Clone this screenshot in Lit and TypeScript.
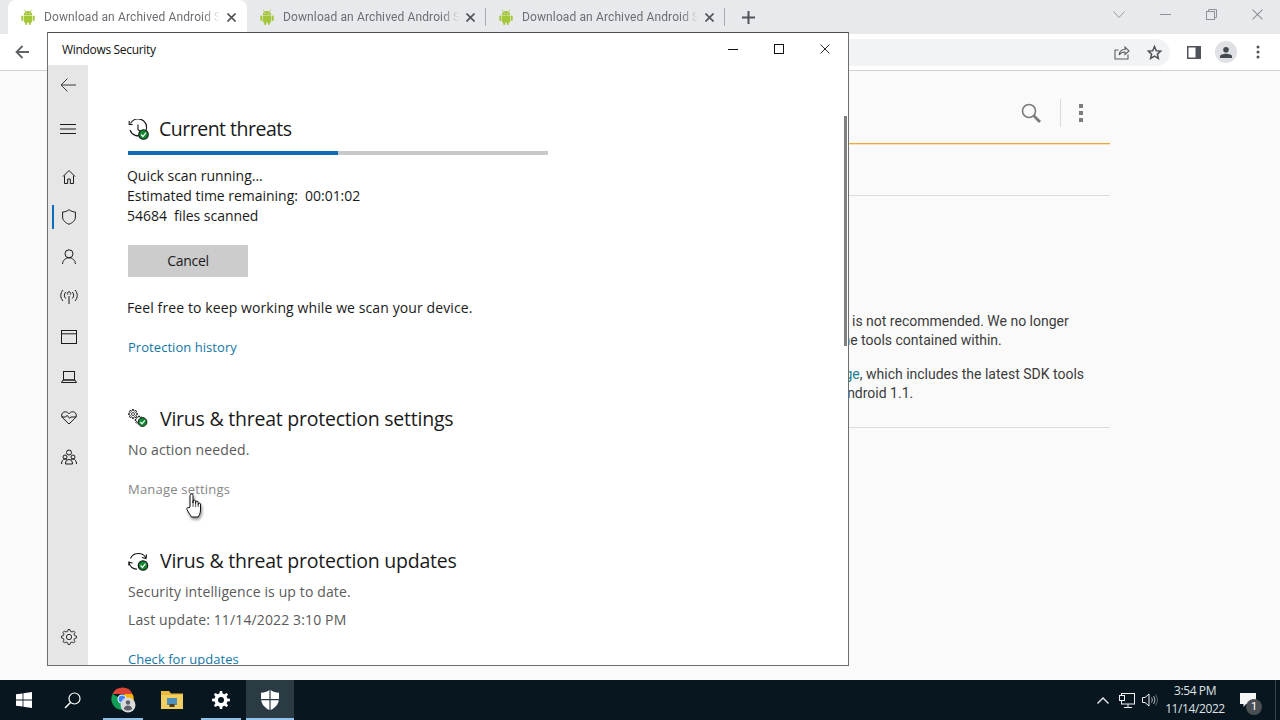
import { LitElement, html, css, svg } from "lit";
import { customElement } from "lit/decorators.js";

const gearPath = (cx: number, cy: number, ro: number, ri: number, teeth: number) => {
  const pts: string[] = [];
  const step = (Math.PI * 2) / teeth;
  for (let i = 0; i < teeth; i++) {
    const a = i * step;
    const w = step * 0.2;
    for (const [r, o] of [[ri, -w * 1.5], [ro, -w * 0.8], [ro, w * 0.8], [ri, w * 1.5]] as [number, number][]) {
      pts.push(`${(cx + r * Math.cos(a + o)).toFixed(2)},${(cy + r * Math.sin(a + o)).toFixed(2)}`);
    }
  }
  return pts.join(" ");
};

const android = html`<svg class="android" width="16" height="16" viewBox="0 0 16 16" fill="#a4c639">
  <path d="M3.9 6a4.1 4.1 0 0 1 8.2 0z"/><path d="M5.3 2.6 4.3.6M10.7 2.6l1-2" stroke="#a4c639" stroke-width=".7"/>
  <circle cx="6.2" cy="4.2" r=".5" fill="#fff"/><circle cx="9.8" cy="4.2" r=".5" fill="#fff"/>
  <path d="M3.9 6.6h8.2v6a1 1 0 0 1-1 1H4.900a1 1 0 0 1-1-1z"/>
  <rect x="1.300" y="6.500" width="2" height="5.500" rx="1"/><rect x="12.700" y="6.500" width="2" height="5.500" rx="1"/>
  <rect x="5.200" y="12" width="2" height="4" rx="1"/><rect x="8.800" y="12" width="2" height="4" rx="1"/>
</svg>`;

const xIcon = (size: number, color: string, w: number) =>
  html`<svg width=${size} height=${size} viewBox="0 0 10 10" fill="none" stroke=${color} stroke-width=${w}><path d="M.5.5l9 9M9.500.5l-9 9"/></svg>`;

const badge = (cx: number, cy: number, r: number) => svg`<circle cx=${cx} cy=${cy} r=${r} fill="#0f8a2e"/>
  <path d="M${cx - r * 0.5} ${cy}l${r * 0.38} ${r * 0.42} ${r * 0.65} -${r * 0.8}" fill="none" stroke="#fff" stroke-width="1.200"/>`;

const nav = [
  svg`<path d="M4 9.500 10 3.500l6 6M5.500 8.500V16.500h3.200v-4.500h2.600v4.500h3.200V8.500" />`,
  svg`<path d="M10 2.700c2 1.500 4 2.200 6.400 2.300v5c0 3.400-2.600 5.600-6.400 7.300C6.200 15.600 3.600 13.400 3.600 10V5C6 4.900 8 4.200 10 2.700z"/>`,
  svg`<circle cx="10" cy="6.800" r="4"/><path d="M3.500 17c.4-3.800 3-6.200 6.500-6.200s6.100 2.400 6.500 6.200"/>`,
  svg`<path d="M10 9v8M8.700 7.600a1.700 1.700 0 1 1 2.600 0"/><path d="M6.700 5.500c-1.800 2-1.800 4.500 0 6.500M13.300 5.500c1.800 2 1.800 4.500 0 6.500M4 3.500c-3 3.500-3 7.500 0 11M16 3.500c3 3.500 3 7.500 0 11" transform="translate(0 -.5)"/>`,
  svg`<rect x="2.500" y="3.500" width="15" height="13"/><path d="M2.500 6.800h15"/>`,
  svg`<rect x="4.500" y="4.500" width="11" height="8.500"/><path d="M2.500 15.500h15l-1.500-2.500H4z"/>`,
  svg`<path d="M10 17 3.800 11C1.500 8.600 3 4.800 6.300 4.800c1.600 0 2.800.8 3.700 2 .9-1.200 2.100-2 3.700-2 3.300 0 4.800 3.800 2.500 6.200z"/><path d="M2.600 10h4l1.500-1.700 2.500 3 1.300-1.300h5.500"/>`,
  svg`<circle cx="10" cy="5.500" r="2.500"/><circle cx="6" cy="10" r="2"/><circle cx="14" cy="10" r="2"/><path d="M2.500 17c0-3 1.500-5 3.500-5 1 0 1.800.4 2.400 1.200M17.500 17c0-3-1.500-5-3.500-5-1 0-1.800.4-2.400 1.200M6.500 17c0-3 1.500-4.500 3.500-4.500s3.500 1.500 3.500 4.500z"/>`,
];

@customElement("app-root")
export class AppRoot extends LitElement {
  static styles = css`
    :host { display: block; width: 1280px; height: 720px; position: relative; overflow: hidden; font-family: Roboto, sans-serif; background: #fafafa; }
    svg { display: block; flex: none; }
    .screen { display: flex; flex-direction: column; height: 720px; }
    .browser { flex: 1; display: flex; flex-direction: column; min-height: 0; }
    .strip { height: 34px; background: #e7e9ec; display: flex; padding-left: 8px; flex: none; }
    .tab { width: 239px; height: 34px; display: flex; align-items: center; padding-left: 12px; box-sizing: border-box; position: relative; font-size: 12px; color: #6a6e72; letter-spacing: 0.01em; }
    .tab.active { background: #fff; border-radius: 8px 8px 0 0; }
    .tab.sep { border-right: 1px solid #a8abaf; }
    .tab:not(.active) { height: 18px; margin-top: 8px; }
    .tab-label { width: 183px; margin-left: 8px; white-space: nowrap; -webkit-mask-image: linear-gradient(90deg, #000 160px, transparent 176px); mask-image: linear-gradient(90deg, #000 160px, transparent 176px); }
    .tab-x { width: 10px; display: flex; }
    .plus { width: 46px; display: flex; align-items: center; justify-content: center; }
    .winbtns { margin-left: auto; display: flex; }
    .winbtn { width: 46px; height: 28px; display: flex; align-items: center; justify-content: center; }
    .toolbar { height: 36px; background: #fff; border-bottom: 1px solid #d0d1d3; display: flex; align-items: center; padding-right: 6px; flex: none; }
    .tb-back { width: 44px; display: flex; justify-content: center; }
    .omni { margin-left: 36px; flex: 1; height: 27px; background: #f1f3f4; border-radius: 0 14px 14px 0; display: flex; justify-content: flex-end; align-items: center; margin-right: 8px; }
    .tbtn { width: 32px; display: flex; justify-content: center; align-items: center; }
    .avatar { width: 22px; height: 22px; border-radius: 50%; background: #dfe1e5; display: flex; align-items: center; justify-content: center; }
    .page { flex: 1; background: #fafafa; min-height: 0; }
    .doc { margin-left: 160px; width: 950px; }
    .doc-head { height: 72px; box-sizing: border-box; padding-top: 12px; padding-right: 27px; display: flex; justify-content: flex-end; align-items: center; }
    .doc-div { width: 1px; height: 28px; background: #d9d9d9; margin: 0 18px 0 19px; }
    .squares { display: flex; flex-direction: column; gap: 2.500px; }
    .squares i { width: 4px; height: 4.500px; background: #7d7d7d; display: block; }
    .doc-rule { height: 1px; background: #e9a93c; border-bottom: 1px solid #f7e2b8; }
    .doc-sub { height: 50px; border-bottom: 1px solid #dcdcdc; }
    .doc-text { padding: 116px 0 24px; border-bottom: 1px solid #dcdcdc; font-size: 14px; line-height: 19px; color: #3c3c3c; white-space: nowrap; }
    .doc-text .ln1 { margin-left: 692px; }
    .doc-text .ln2 { margin-left: 652px; }
    .doc-text .ln3 { margin-left: 669px; margin-top: 15px; }
    .doc-text .ln4 { margin-left: 678px; }
    .doc-link { color: #1a7f8f; }
    .taskbar { height: 40px; background: #08161f; display: flex; flex: none; color: #e6e9ea; }
    .tk { width: 48px; height: 40px; display: flex; align-items: center; justify-content: center; position: relative; }
    .tk.chrome { margin-left: 3px; }
    .tk.gap { margin-left: 1px; }
    .tk.on { background: #2b3b44; }
    .tk.run::after { content: ""; position: absolute; bottom: 0; left: 4px; right: 4px; height: 2px; background: #8fc0e6; }
    .tk.on::after { left: 0; right: 0; background: #8fc5ee; }
    .tray { margin-left: auto; display: flex; align-items: center; height: 40px; }
    .tr { display: flex; justify-content: center; align-items: center; height: 40px; }
    .tr.w24 { width: 24px; }
    .tr.w22 { width: 22px; }
    .clock { width: 68px; font-family: "Open Sans", sans-serif; font-size: 12px; line-height: 18px; text-align: center; letter-spacing: -0.4px; color: #dfe3e5; }
    .notif { width: 38px; position: relative; }
    .notif-n { position: absolute; left: 17px; top: 19px; width: 16px; height: 16px; border-radius: 50%; background: #4a4f53; color: #fff; font-size: 11px; line-height: 16px; text-align: center; }
    .tray-end { width: 1px; height: 40px; background: #38454c; margin: 0 4px 0 8px; }

    .win { position: absolute; left: 47px; top: 32px; width: 802px; height: 634px; box-sizing: border-box; background: #fff; border: 1px solid #6e6e6e; border-top-color: #4c4c4c; display: flex; flex-direction: column; font-family: "Open Sans", sans-serif; overflow: hidden; }
    .titlebar { height: 32px; flex: none; display: flex; align-items: center; padding-left: 14px; font-size: 12px; color: #111; letter-spacing: -0.32px; }
    .ctrls { margin-left: auto; display: flex; }
    .ctrl { width: 46px; height: 32px; display: flex; align-items: center; justify-content: center; }
    .body { flex: 1; display: flex; min-height: 0; }
    .side { width: 40px; background: #e6e6e6; display: flex; flex-direction: column; padding-bottom: 8px; box-sizing: border-box; flex: none; position: relative; }
    .sbtn { height: 40px; display: flex; align-items: center; justify-content: center; flex: none; padding-left: 2px; box-sizing: border-box; position: relative; }
    .sbtn.top { padding-left: 0; }
    .sbtn.burger { margin-top: 4px; margin-bottom: 8px; }
    .sbtn.active::before { content: ""; position: absolute; left: 4px; top: 8px; width: 2px; height: 24px; background: #0f6cbd; }
    .sbtn.settings { margin-top: auto; }
    .sbtn svg { fill: none; stroke: #1b1b1b; stroke-width: 1; }
    .sbtn svg.back { stroke: #3a3a3a; }
    .main { flex: 1; padding: 50px 0 0 40px; overflow: hidden; min-width: 0; color: #1a1a1a; font-size: 14px; line-height: 20px; white-space: nowrap; }
    .h { height: 28px; display: flex; align-items: center; font-size: 19.500px; line-height: 28px; letter-spacing: -0.23px; color: #1a1a1a; }
    .h .ico { width: 32px; display: flex; }
    .h.first { letter-spacing: -0.5px; }
    .h.first .ico { width: 31px; }
    .h.s { margin-top: 48px; }
    .bar { width: 420px; height: 4px; background: #c9c9c9; margin-top: 8px; }
    .bar i { display: block; height: 4px; background: #0f6cb4; }
    .status { margin: 11px 0 0 -1px; letter-spacing: -0.03px; }
    .cancel { width: 120px; height: 32px; background: #cccccc; margin-top: 19px; display: flex; align-items: center; justify-content: center; letter-spacing: -0.3px; }
    .p { margin-top: 20px; }
    .p.flush { margin: 21px 0 0 -1px; letter-spacing: 0.1px; }
    .p.tight { margin-top: 19px; }
    .link { color: #1377a6; font-size: 13px; letter-spacing: 0.05px; }
    .muted { color: #5a5a5a; letter-spacing: 0.13px; }
    .mt7 { margin-top: 7px; } .mt8 { margin-top: 8px; }
    .dim { color: #868686; font-size: 13px; letter-spacing: 0.2px; }
    .scroll { position: absolute; right: 1px; top: 83px; width: 3px; height: 230px; background: #808080; }
    .hand { position: absolute; left: 186px; top: 493px; filter: drop-shadow(1px 2px 1.500px rgba(0,0,0,.45)); }
  `;

  private tab(active: boolean, sep: boolean) {
    return html`<div class="tab ${active ? "active" : ""} ${sep ? "sep" : ""}">
      ${android}
      <span class="tab-label">Download an Archived Android S</span>
      <span class="tab-x">${xIcon(9, "#50545a", 1.800)}</span>
    </div>`;
  }

  render() {
    return html`
      <div class="screen">
        <div class="browser">
          <div class="strip">
            ${this.tab(true, false)}${this.tab(false, true)}${this.tab(false, true)}
            <div class="plus"><svg width="13" height="13" viewBox="0 0 13 13" stroke="#50545a" stroke-width="2"><path d="M6.500 0v13M0 6.500h13"/></svg></div>
            <div class="winbtns">
              <div class="winbtn"><svg width="12" height="7" viewBox="0 0 12 7" fill="none" stroke="#9a9da1"><path d="M.5.500 6 6.500 11.500.500"/></svg></div>
              <div class="winbtn"><svg width="11" height="1" viewBox="0 0 11 1" stroke="#8e9195"><path d="M0 .5h11"/></svg></div>
              <div class="winbtn"><svg width="11" height="11" viewBox="0 0 11 11" fill="none" stroke="#8e9195"><rect x=".5" y="2.500" width="8" height="8"/><path d="M2.500 2.500V.5h8v8h-2"/></svg></div>
              <div class="winbtn">${xIcon(11, "#8e9195", 1)}</div>
            </div>
          </div>
          <div class="toolbar">
            <div class="tb-back"><svg width="14" height="14" viewBox="0 0 14 14" fill="none" stroke="#5f6368" stroke-width="1.800"><path d="M14 7H1.500M7.500 1 1.500 7l6 6"/></svg></div>
            <div class="omni">
              <div class="tbtn"><svg width="16" height="15" viewBox="0 0 16 15" fill="none" stroke="#5a5e63" stroke-width="1.100"><path d="M14 9.500V14H1V5h3.500"/><path d="M5 10c.5-3.500 3-5.500 6-5.500V2l4 4-4 3.500V7C8.500 7 6.500 8 5 10z"/></svg></div>
              <div class="tbtn"><svg width="15" height="15" viewBox="0 0 15 15" fill="none" stroke="#50545a" stroke-width="1.500"><path d="M7.500 1.500 9.300 5.700l4.500.4-3.400 3 1 4.400-3.900-2.300-3.900 2.300 1-4.400-3.400-3 4.500-.4z"/></svg></div>
            </div>
            <div class="tbtn"><svg width="14" height="13" viewBox="0 0 14 13"><rect width="14" height="13" fill="#50545a"/><rect x="1.500" y="1.500" width="7" height="10" fill="#fff"/></svg></div>
            <div class="tbtn"><div class="avatar"><svg width="12" height="11" viewBox="0 0 12 11" fill="#454a50"><circle cx="6" cy="2.800" r="2.800"/><path d="M0 11V9.500c0-1.800 3-2.700 6-2.700s6 .9 6 2.700V11z"/></svg></div></div>
            <div class="tbtn"><svg width="4" height="14" viewBox="0 0 4 14" fill="#50545a"><circle cx="2" cy="2" r="1.500"/><circle cx="2" cy="7" r="1.500"/><circle cx="2" cy="12" r="1.500"/></svg></div>
          </div>
          <div class="page">
            <div class="doc">
              <div class="doc-head">
                <svg width="20" height="20" viewBox="0 0 20 20" fill="none" stroke="#7b7b7b"><circle cx="8" cy="8" r="6.500" stroke-width="1.600"/><path d="M12.800 12.800 19 19" stroke-width="2.800"/></svg>
                <div class="doc-div"></div>
                <div class="squares"><i></i><i></i><i></i></div>
              </div>
              <div class="doc-rule"></div>
              <div class="doc-sub"></div>
              <div class="doc-text">
                <div class="ln1">is not recommended. We no longer</div>
                <div class="ln2">use the tools contained within.</div>
                <div class="ln3"><span class="doc-link">page</span>, which includes the latest SDK tools</div>
                <div class="ln4">Android 1.1.</div>
              </div>
            </div>
          </div>
        </div>
        <div class="taskbar">
          <div class="tk"><svg width="16" height="16" viewBox="0 0 16 16" fill="#fff"><path d="M0 2.300 6.600 1.400V7.600H0zM7.400 1.300 16 0V7.600H7.400zM0 8.400H6.600V14.600L0 13.700zM7.400 8.400H16V16L7.400 14.700z"/></svg></div>
          <div class="tk"><svg width="17" height="17" viewBox="0 0 17 17" fill="none" stroke="#fff" stroke-width="1.200"><circle cx="10.500" cy="6.500" r="5.500"/><path d="M6.500 10.500 1 16" stroke-width="1.500"/></svg></div>
          <div class="tk chrome run"><svg width="26" height="26" viewBox="0 0 26 26">
            <path d="M2.500 7A11 11 0 0 1 22.500 7H12z" fill="#db4437"/>
            <path d="M2.500 7A11 11 0 0 0 12 23l5-8z" fill="#0f9d58"/>
            <path d="M22.500 7A11 11 0 0 1 12 23l5-8-3-8z" fill="#f4b400"/>
            <circle cx="12" cy="12" r="4.500" fill="#fff"/><circle cx="12" cy="12" r="3.500" fill="#4285f4"/>
            <circle cx="18" cy="18" r="7.500" fill="#d9dadb"/><circle cx="18" cy="15.500" r="2.200" fill="#5c6066"/><path d="M13.800 22c.4-2.400 2.200-3.500 4.200-3.500s3.800 1.100 4.200 3.500a7 7 0 0 1-8.400 0z" fill="#5c6066"/>
          </svg></div>
          <div class="tk gap"><svg width="22" height="18" viewBox="0 0 22 18"><path d="M0 0H8L10 2.500H22V18H0z" fill="#e8b93c"/><rect y="4" width="22" height="14" fill="#f3cf62"/><rect x="6" y="7" width="10" height="7" fill="#4f8fbd"/><rect x="8.500" y="13" width="5" height="3" fill="#55391b"/></svg></div>
          <div class="tk gap run"><svg width="18" height="18" viewBox="0 0 18 18"><polygon fill="#fff" points=${gearPath(9, 9, 9, 6.600, 8)}/><circle cx="9" cy="9" r="3" fill="#08161f"/></svg></div>
          <div class="tk gap on run"><svg width="18" height="20" viewBox="0 0 18 20" fill="#fff"><path d="M8.400 0C6 1.800 3 2.600 0 2.800V9H8.400zM9.600 0V9H18V2.800C15 2.600 12 1.800 9.600 0zM.2 10.200C.8 14.500 4 17.700 8.400 20V10.200zM9.600 10.200V20c4.400-2.300 7.600-5.500 8.200-9.800z"/></svg></div>
          <div class="tray">
            <div class="tr w24"><svg width="12" height="7" viewBox="0 0 12 7" fill="none" stroke="#eef0f1" stroke-width="1.300"><path d="M.5 6.500 6 1l5.500 5.500"/></svg></div>
            <div class="tr w24"><svg width="16" height="15" viewBox="0 0 16 15" fill="none" stroke="#eef0f1"><rect x="2.500" y=".5" width="13" height="10.500"/><path d="M9 11v3M5 14.500h8"/><rect x=".5" y="2.500" width="5" height="5" fill="#08161f"/></svg></div>
            <div class="tr w22"><svg width="16" height="14" viewBox="0 0 16 14" fill="none" stroke="#eef0f1"><path d="M.5 4.500H3L7 1V13L3 9.500H.5z"/><path d="M9.500 4.500c1 1.500 1 3.500 0 5M11.500 3c1.800 2.500 1.800 5.500 0 8" stroke="#b7bcbf"/><path d="M13.500 1.500c2.500 3.500 2.500 7.500 0 11" stroke="#5f686d"/></svg></div>
            <div class="clock">3:54 PM<br />11/14/2022</div>
            <div class="tr notif"><svg width="16" height="14" viewBox="0 0 16 14" fill="#f4f5f5"><path d="M0 0H16V11H6L3.500 14V11H0z"/></svg><div class="notif-n">1</div></div>
            <div class="tray-end"></div>
          </div>
        </div>
      </div>

      <div class="win">
        <div class="titlebar">Windows Security
          <div class="ctrls">
            <div class="ctrl"><svg width="10" height="1" viewBox="0 0 10 1" stroke="#111"><path d="M0 .5h10"/></svg></div>
            <div class="ctrl"><svg width="10" height="10" viewBox="0 0 10 10" fill="none" stroke="#111"><rect x=".5" y=".5" width="9" height="9"/></svg></div>
            <div class="ctrl">${xIcon(10, "#111", 0.9)}</div>
          </div>
        </div>
        <div class="body">
          <div class="side">
            <div class="sbtn top"><svg class="back" width="16" height="14" viewBox="0 0 16 14"><path d="M16 7H1M7.500.5 1 7l6.500 6.500"/></svg></div>
            <div class="sbtn top burger"><svg width="16" height="12" viewBox="0 0 16 12"><path d="M0 1.500h16M0 6h16M0 10.500h16"/></svg></div>
            ${nav.map((n, i) => html`<div class="sbtn ${i === 1 ? "active" : ""}"><svg width="20" height="20" viewBox="0 0 20 20">${n}</svg></div>`)}
            <div class="sbtn settings"><svg width="16" height="16" viewBox="0 0 18 18"><polygon points=${gearPath(9, 9, 8.500, 6.600, 8)}/><circle cx="9" cy="9" r="3"/></svg></div>
          </div>
          <div class="main">
            <div class="h first"><div class="ico"><svg width="21" height="21" viewBox="0 0 21 21" fill="none" stroke="#1a1a1a" stroke-width="1.100">
              <path d="M2.500 4.500A8.500 8.500 0 1 1 2 11"/><path d="M1.200 2v3.500h3.500M10 5.500v5.300l3 2"/>${badge(15.5, 15.5, 4.800)}
            </svg></div>Current threats</div>
            <div class="bar"><i style="width:${(210 / 420) * 100}%"></i></div>
            <div class="status">Quick scan running...<br />Estimated time remaining:&nbsp; 00:01:02<br />54684&nbsp; files scanned</div>
            <div class="cancel">Cancel</div>
            <div class="p flush">Feel free to keep working while we scan your device.</div>
            <div class="p tight link">Protection history</div>
            <div class="h s"><div class="ico"><svg width="21" height="21" viewBox="0 0 21 21" fill="none" stroke="#1a1a1a">
              <polygon stroke-width="1" points=${gearPath(5, 5, 4.600, 3.300, 8)}/><circle cx="5" cy="5" r="1.500" stroke-width=".8"/>
              <polygon stroke-width="1" points=${gearPath(11, 11, 4, 3, 8)}/>${badge(14.5, 13, 4.400)}
            </svg></div>Virus &amp; threat protection settings</div>
            <div class="mt7 muted">No action needed.</div>
            <div class="p tight dim">Manage settings</div>
            <div class="h s"><div class="ico"><svg width="21" height="21" viewBox="0 0 21 21" fill="none" stroke="#1a1a1a" stroke-width="1.200">
              <path d="M2.500 7.500C4 4 7 2.500 10.500 2.500c3 0 6 1.500 7.500 4.500M1 11.500c.5 4 4.500 7 8 6.500"/><path d="M18.500 3.500 18 7.500l-4-1M.8 14.500 1 11l3.500 1.300"/>${badge(15, 14.500, 4.700)}
            </svg></div>Virus &amp; threat protection updates</div>
            <div class="mt7 muted">Security intelligence is up to date.</div>
            <div class="mt8 muted">Last update: 11/14/2022 3:10 PM</div>
            <div class="p tight link">Check for updates</div>
          </div>
        </div>
        <div class="scroll"></div>
      </div>

      <div class="hand">
        <svg width="16" height="25" viewBox="0 0 16 25" fill="#fff" stroke="#111" stroke-width="1" stroke-linejoin="round">
          <path d="M4 14V2.500a1.500 1.500 0 0 1 3 0V10V8.500a1.300 1.300 0 0 1 2.600 0V10.500 9.500a1.300 1.300 0 0 1 2.600 0V11.500 11a1.200 1.200 0 0 1 2.300 0v6c0 3-1.500 6-2.500 7H5.500C4 21.500 2.500 19.500 1 16.500c-.7-1.500 1-2.800 2-1.500z"/>
          <path d="M7 9v5M9.600 10v4M12.200 11v3" stroke-width=".7"/>
        </svg>
      </div>
    `;
  }
}
